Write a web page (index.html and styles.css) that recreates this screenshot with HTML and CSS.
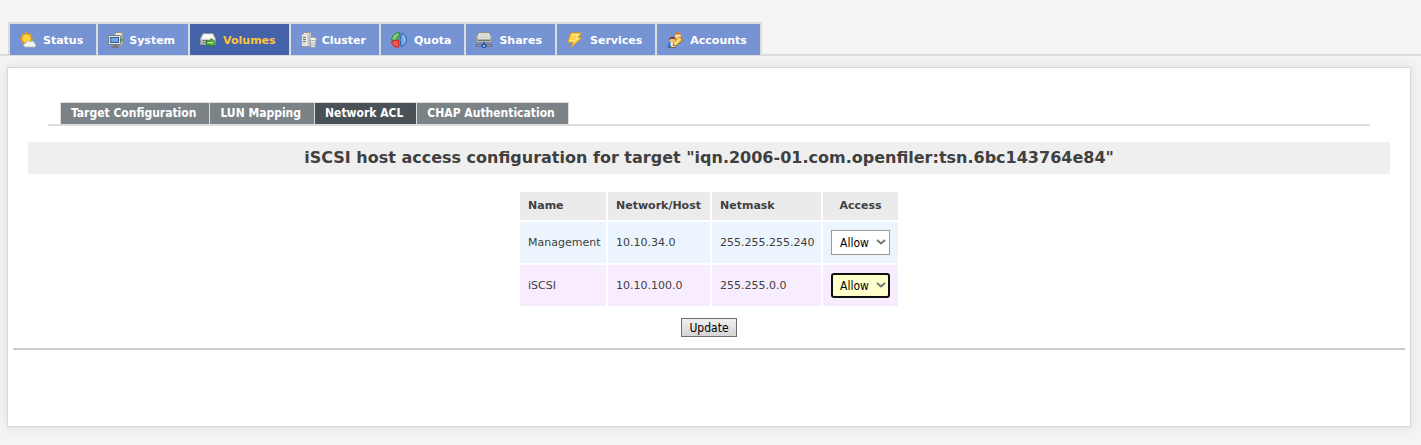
FILE: index.html
```html
<!DOCTYPE html>
<html lang="en">
<head>
<meta charset="utf-8">
<title>Volumes : Network ACL</title>
<link rel="stylesheet" href="styles.css">
</head>
<body>
<nav class="main-nav" aria-label="Main">
  <ul class="tabs">
    <li><a class="tab" href="#status"><svg class="icon" viewBox="0 0 16 16"><g stroke="#e9a900" stroke-width="1.4"><path d="M6.500 0v13M0 6.500h13M2 2l9 9M11 2l-9 9"/></g><circle cx="6.500" cy="6.500" r="4.500" fill="#ffd23c" stroke="#eaa21a"/><path d="M5 15h9.500c2-.5 1.800-3.500-.3-3.700.3-2.200-2.800-3.200-3.900-1.300C8.500 8 6 9.300 6.400 11 3.200 10.800 3 14.500 5 15z" fill="#f2f2ef" stroke="#b9b9b4" stroke-width=".8"/></svg>Status</a></li>
    <li><a class="tab snug" href="#system"><svg class="icon" viewBox="0 0 16 16"><path d="M6.500 2.500l2-2h7v11l-2 2h-7z" fill="#d8d8d4" stroke="#8c8c88"/><path d="M13 2v11l2-2V1z" fill="#aaa"/><path d="M8 2h5" stroke="#fff"/><rect x="13" y="7" width="2" height="2" fill="#4ca53b"/><rect x=".5" y="3.500" width="12" height="9" rx="1" fill="#e8e8e4" stroke="#777"/><rect x="2.500" y="5.500" width="8" height="5" fill="#76a3dc" stroke="#315f9e"/><path d="M5 13h4v1.500h1.500V16H3.500v-1.500H5z" fill="#777"/></svg>System</a></li>
    <li><a class="tab active" href="#volumes" aria-current="page"><svg class="icon" viewBox="0 0 16 16"><path d="M3 1.500h10l2.500 5v6H.5v-6z" fill="#e7e7e5" stroke="#999"/><path d="M4 2.500h8l1.500 4h-11z" fill="#fafafa"/><path d="M1 7.500h14V12H1z" fill="#b9bab8"/><path d="M2.500 8.500h6M2.500 10.500h4" stroke="#777"/><path d="M6.500 9H11V6.500l4.500 4.300L11 15.300V13H6.500z" fill="#69c34a" stroke="#247d18"/><path d="M7.500 10.500h5" stroke="#b5e993"/></svg>Volumes</a></li>
    <li><a class="tab snug" href="#cluster"><svg class="icon" viewBox="0 0 16 16"><path d="M.5 3.500L3.500.5H10v12L8 14.500H1.500l-1-1z" fill="#dededb" stroke="#999"/><path d="M6.500 3L8.500 1h1.500v11l-3.500 2z" fill="#c4c4c1"/><path d="M5.500 3.500v10.500" stroke="#f4f4f4"/><path d="M2 5.500h3M2 7.500h3M2 9.500h3" stroke="#777"/><path d="M9 7.500l.5 7c0 1.300 5 1.300 5 0l.5-7" fill="#eee" stroke="#999"/><ellipse cx="12" cy="7" rx="3.500" ry="1.500" fill="#fff" stroke="#a6a6a4"/><path d="M11 10v4.500M13 10v4.500" stroke="#b9b9b9"/></svg>Cluster</a></li>
    <li><a class="tab" href="#quota"><svg class="icon" viewBox="0 0 16 16"><path d="M.6 8C1 3 5 .5 9 .6L7.500 6 4 9z" fill="#65bb65" stroke="#26863a"/><path d="M2.500 7C3 4 5 2.500 7.500 2" fill="none" stroke="#b3e8a9"/><path d="M.6 9.500L7.500 8 8 15C4 15.500 1 13.500.6 9.500z" fill="#f15b4f" stroke="#cc211f"/><path d="M11 1.200c3.500 1 4.600 4.500 4.500 7.300-.3 3-2.500 5.300-5.500 6L9 7z" fill="#70a6e6" stroke="#275ca8"/><path d="M11.500 3.500c2 1.800 2.500 4.500 1.700 7" fill="none" stroke="#b4d7ff"/></svg>Quota</a></li>
    <li><a class="tab" href="#shares"><svg class="icon" viewBox="0 0 16 16"><path d="M3 .5h10l2.500 4.500v5H.5V5z" fill="#ecece9" stroke="#8e8e8a"/><path d="M3.500 2h9M2.500 4h11" stroke="#c8c8c4"/><path d="M1 5.500h14V9.500H1z" fill="#a9aaa7"/><path d="M2 6.500h12" stroke="#e6e6e6"/><path d="M2 8.500h12" stroke="#727270"/><path d="M8 10v3M0 13.500h16" stroke="#555" stroke-width="2"/><path d="M1 13.500h4M11 13.500h4" stroke="#999"/><rect x="6.500" y="12.500" width="3" height="3" fill="#87b9ff" stroke="#1c58c8"/></svg>Shares</a></li>
    <li><a class="tab" href="#services"><svg class="icon" viewBox="0 0 16 16"><path d="M4 1h10.500L11 5.500h4L4 15.500l2.200-5.300H.8z" fill="#ffd44d" stroke="#dc9d15"/><path d="M5 2.500h6.500L8.500 7h3.300M2.500 8.700h5" fill="none" stroke="#fff2a4"/></svg>Services</a></li>
    <li><a class="tab" href="#accounts"><svg class="icon" viewBox="0 0 16 16"><path d="M1 15.500l.5-4.500 3-1.500 4.500 1v5z" fill="#f8f8f8" stroke="#79604c"/><path d="M1 15v-4l2-1 1.500 5z" fill="#347ed2"/><circle cx="5.500" cy="8" r="3" fill="#f3c28f"/><path d="M2 8c-.3-4 7-4.500 7 0L7 7 4 7z" fill="#75412a"/><path d="M7.500 6l3-1h3.500l1.700 3-4 4z" fill="#f4a83f" stroke="#ad691c"/><circle cx="11" cy="3.500" r="3" fill="#ffd09b"/><path d="M7.500 3C7.500-1 14.700-.8 14.500 4l-1-1.500-3-.5z" fill="#c7731e"/><path d="M6 14l.5-3 6-6 2.500 2.500-6 6z" fill="#ffe27a" stroke="#ce921e"/><path d="M6 14l.5-2 1.500 1.500z" fill="#444"/><path d="M12 5l2.500 2.500" stroke="#e76b50"/></svg>Accounts</a></li>
  </ul>
</nav>
<main class="panel">
  <nav class="sub-nav" aria-label="iSCSI targets">
    <ul class="sub-tabs">
      <li><a class="sub-tab" href="#target">Target Configuration</a></li>
      <li><a class="sub-tab" href="#lun">LUN Mapping</a></li>
      <li><a class="sub-tab current" href="#acl" aria-current="page">Network ACL</a></li>
      <li><a class="sub-tab" href="#chap">CHAP Authentication</a></li>
    </ul>
  </nav>
  <h1 class="title">iSCSI host access configuration for target "iqn.2006-01.com.openfiler:tsn.6bc143764e84"</h1>
  <form class="acl-form">
    <table class="acl">
      <thead>
        <tr><th scope="col" class="name">Name</th><th scope="col" class="host">Network/Host</th><th scope="col" class="mask">Netmask</th><th scope="col" class="access">Access</th></tr>
      </thead>
      <tbody>
        <tr class="row-blue"><td>Management</td><td>10.10.34.0</td><td>255.255.255.240</td><td><span class="picker"><select class="select" aria-label="Access for Management"><option>Allow</option><option>Deny</option></select><svg class="chevron" viewBox="0 0 10 6"><path d="M1 1l4 3.500L9 1"/></svg></span></td></tr>
        <tr class="row-violet"><td>iSCSI</td><td>10.10.100.0</td><td>255.255.0.0</td><td><span class="picker"><select class="select changed" aria-label="Access for iSCSI"><option>Allow</option><option>Deny</option></select><svg class="chevron" viewBox="0 0 10 6"><path d="M1 1l4 3.500L9 1"/></svg></span></td></tr>
      </tbody>
    </table>
    <button class="update" type="button">Update</button>
  </form>
  <hr class="rule">
</main>
</body>
</html>
```
FILE: styles.css
```css
* { box-sizing: border-box; }
body {
  margin: 0;
  background: #f4f4f4;
  color: #404040;
  font-family: "DejaVu Sans", Verdana, sans-serif;
  font-size: 11px;
}
ul { margin: 0; padding: 0; list-style: none; }
.main-nav {
  display: flex;
  padding: 22px 8px 0;
  background: linear-gradient(#dcdcdc, #dcdcdc) bottom / 100% 2px no-repeat;
}
.tabs {
  display: flex;
  gap: 2px;
  padding: 2px 2px 1px;
  background: #dcdcdc;
}
.tab {
  display: flex;
  align-items: center;
  gap: 7px;
  height: 31px;
  padding: 1px 13px 0 10px;
  background: #7693d3;
  color: #fff;
  font-weight: bold;
  text-decoration: none;
}
.tab.snug { gap: 5px; }
.tab.active { background: #4463ab; color: #ffc536; }
.icon { width: 16px; height: 16px; fill: none; }
.panel {
  min-height: 360px;
  margin: 11px 10px 18px 7px;
  padding: 34px 5px 76px;
  border: 1px solid #d8d8d8;
  background: #fff;
  box-shadow: 0 0 10px #dcdcdc;
}
.sub-nav {
  display: flex;
  margin: 0 35px;
  padding: 0 12px;
  background: linear-gradient(#dcdcdc, #dcdcdc) bottom / 100% 2px no-repeat;
}
.sub-tabs {
  display: flex;
  gap: 1px;
  padding: 1px 1px 2px;
  background: #dcdcdc;
}
.sub-tab {
  display: block;
  height: 21px;
  padding: 0 13px 0 10px;
  background: #7b8387;
  color: #fff;
  font-family: "DejaVu Sans Condensed", "DejaVu Sans", Tahoma, sans-serif;
  font-size: 12px;
  font-weight: bold;
  line-height: 20px;
  text-decoration: none;
}
.sub-tab.current { background: #4a5257; }
.title {
  margin: 16px 15px;
  background: #efefef;
  font-size: 16px;
  line-height: 32px;
  text-align: center;
}
.acl-form { display: flex; flex-direction: column; align-items: center; gap: 10px; }
.acl { border-spacing: 2px; }
.acl th, .acl td { padding: 8px 4px 8px 8px; text-align: left; line-height: 12px; }
.acl th { background: #ebebeb; }
.acl .name { width: 86px; }
.acl .host { width: 102px; }
.acl .mask { width: 109px; }
.acl .access { width: 75px; padding: 8px; text-align: center; }
.row-blue { background: #ecf5fd; }
.row-violet { background: #f7edff; }
.picker { display: block; position: relative; width: 59px; }
.select {
  display: block;
  width: 100%;
  height: 25px;
  padding: 0 8px;
  appearance: none;
  border: 1px solid #999;
  border-radius: 0;
  background: #fff;
  color: #000;
  font-family: "DejaVu Sans Condensed", "DejaVu Sans", sans-serif;
  font-size: 12px;
}
.select.changed { padding: 0 7px; border: 2px solid #101010; border-radius: 3px; background: #ffffcc; }
.chevron { position: absolute; top: 9px; right: 4px; width: 10px; height: 6px; fill: none; stroke: #767676; stroke-width: 2; pointer-events: none; }
.update {
  height: 19px;
  padding: 0 7px;
  border: 1px solid #707070;
  background: linear-gradient(#f0f0f0, #d5d5d5);
  color: #000;
  font-family: "DejaVu Sans Condensed", "DejaVu Sans", sans-serif;
  font-size: 12px;
}
.rule { height: 2px; margin: 11px 0 0; border: 0; background: #ccc; }
```
